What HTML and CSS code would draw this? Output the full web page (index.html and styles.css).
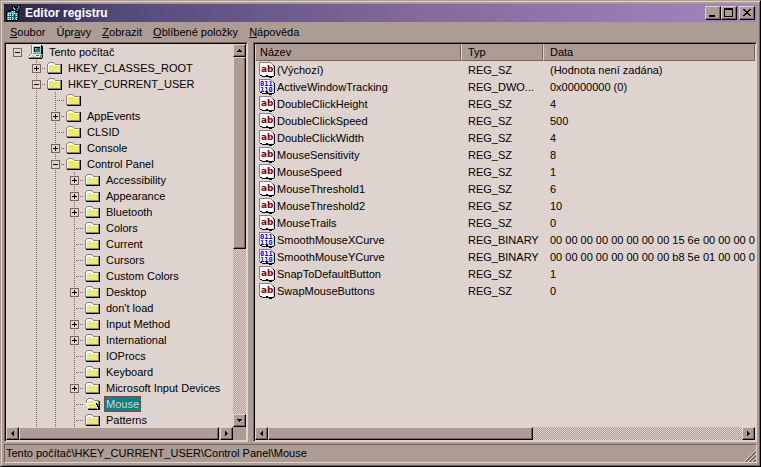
FILE: index.html
```
<!DOCTYPE html>
<html lang="cs">
<head>
    <meta charset="UTF-8">
    <meta name="viewport" content="width=device-width, initial-scale=1.0">
    <title>Editor registru</title>
    <link rel="stylesheet" href="styles.css">
</head>
<body>

    <svg class="sprites" aria-hidden="true">
        <defs>
            <pattern id="dots" width="2" height="2" patternUnits="userSpaceOnUse">
                <rect width="2" height="2" fill="#ffff00"/>
                <rect width="1" height="1" fill="#ded3ce"/>
                <rect x="1" y="1" width="1" height="1" fill="#ded3ce"/>
            </pattern>
            <pattern id="cubes" width="2" height="2" patternUnits="userSpaceOnUse">
                <rect width="2" height="2" fill="#00c6c6"/>
                <rect width="1" height="1" fill="#ffffff"/>
            </pattern>
        </defs>
        <symbol id="folder" viewBox="0 0 16 16">
            <path d="M1 14h14V4h-1v9H1z" fill="#000"/>
            <path d="M0 13V4h1V3h1V2h5v1h1v1h6v9z" fill="#848484"/>
            <path d="M1 12V4h1V3h5v1h1v1h5v7z" fill="#fff"/>
            <path d="M2 12V5h5v1h6v6z" fill="url(#dots)"/>
        </symbol>
        <symbol id="folder-open" viewBox="0 0 16 16">
            <path d="M3 13h11V5h1v9H3z" fill="#000"/>
            <path d="M1 7V4h1V3h1V2h5v1h1v1h5v9H3v-2H2V9H1z" fill="#848484"/>
            <path d="M2 8V4h1V3h5v1h1v1h4v8z" fill="#fff"/>
            <path d="M3 5h5v1h5v2H3z" fill="url(#dots)"/>
            <path d="M0 7h10v1h1v1h1v2h1v1H3v-1H2V9H1V8H0z" fill="#fff"/>
            <path d="M2 8h8v1h1v2h1v1H4v-2H3V9H2z" fill="url(#dots)"/>
            <path d="M11 7h1v1h1v2h1v3h-1v-2h-1V9h-1z" fill="#000"/>
        </symbol>
        <symbol id="computer" viewBox="0 0 16 16">
            <path d="M4 1h10v1h1v9H5v-1H4z" fill="#000"/>
            <path d="M3 1h10v9H3z" fill="#848484"/>
            <path d="M4 1h9v1H4zM4 2h1v8H4z" fill="#fff"/>
            <path d="M5 2h8v7H5z" fill="#c6c6c6"/>
            <path d="M6 3h6v5H6z" fill="#008484"/>
            <path d="M6 3h6v1H6zM6 3h1v5H6z" fill="#000"/>
            <path d="M7 4h2v1H8v1H7z" fill="#5acece"/>
            <path d="M2 10h13v1h-1v3h-1v1H1v-1H0v-1h1v-2h1z" fill="#848484"/>
            <path d="M3 10h10v1h-1v2H1v-1h1v-1h1z" fill="#fff"/>
            <path d="M3 12h1v-1h1v1h1v-1h1v1h1v-1h1v1h-1v1H3z" fill="#c6c6c6"/>
            <path d="M8 11h3v1H8z" fill="#009c00"/>
            <path d="M1 14h13v-3h1v3h-1v1H1z" fill="#000"/>
        </symbol>
        <symbol id="regedit" viewBox="0 0 16 16">
            <path d="M0 7h2V5h4V4h4v3h3v8h-1v1H0z" fill="#000"/>
            <path d="M1 8h1V7h3V6h4v2h2v7H1z" fill="url(#cubes)"/>
            <path d="M5 8h1v7H5zM8 9h1v6H8zM1 11h10v1H1z" fill="#006363"/>
            <path d="M6 1h3v1h1v3H9v1H7V5H6z" fill="#000"/>
            <path d="M7 2h1v1h1v2H8V4H7z" fill="#00ffff"/>
            <path d="M11 1h1V0h3v3h-1v2h-1v2h-2V5h-1V2h1z" fill="#000"/>
            <path d="M12 1h2v1h-1v2h-1v2h-1V3h1z" fill="#00a5a5"/>
            <path d="M11 8h1v5h-1z" fill="#008484"/>
        </symbol>
        <symbol id="page" viewBox="0 0 16 16">
            <path d="M13 2h1v1h1v1h1v10h-1v1h-3v-1h3V4h-2z" fill="#000"/>
            <path d="M1 13h2v1h3v-1h3v1h3v1h1v1h-3v-1H3v-1H1z" fill="#000"/>
            <path d="M0 0h12v1h1v1h1v11h-1v1h-3v-1H7v1H3v-1H0z" fill="#848484"/>
            <path d="M1 1h11v1h1v1h1v10h-1v1h-3v-1H7v1H3v-1H1z" fill="#fff"/>
        </symbol>
    </svg>

    <div class="window">
        <header class="titlebar">
            <svg class="icon"><use href="#regedit"/></svg>
            <h1>Editor registru</h1>
            <div class="controls">
                <button type="button" class="raised" aria-label="Minimalizovat">
                    <svg viewBox="0 0 12 10"><path d="M2 7h6v2H2z"/></svg>
                </button>
                <button type="button" class="raised" aria-label="Maximalizovat">
                    <svg viewBox="0 0 12 10"><path fill-rule="evenodd" d="M1 0h9v9H1zM2 2v6h7V2z"/></svg>
                </button>
                <button type="button" class="raised close" aria-label="Zavřít">
                    <svg viewBox="0 0 12 10"><path d="M2 1h2v1h1v1h2V2h1V1h2v1H9v1H8v1H7v1h1v1h1v1h1v1H8V7H7V6H5v1H4v1H2V7h1V6h1V5h1V4H4V3H3V2H2z"/></svg>
                </button>
            </div>
        </header>

        <nav class="menu">
            <button type="button"><u>S</u>oubor</button>
            <button type="button">Úpr<u>a</u>vy</button>
            <button type="button"><u>Z</u>obrazit</button>
            <button type="button"><u>O</u>blíbené položky</button>
            <button type="button"><u>N</u>ápověda</button>
        </nav>

        <main class="panes">
            <section class="pane tree-pane">
                <div class="tree">
                    <ul>
                        <li>
                            <div class="node root"><span class="joint"><button type="button" class="box minus" aria-label="Sbalit"></button></span><svg class="icon"><use href="#computer"/></svg><span class="label">Tento počítač</span></div>
                            <ul>
                                <li><div class="node"><span class="joint"><button type="button" class="box plus" aria-label="Rozbalit"></button></span><svg class="icon"><use href="#folder"/></svg><span class="label">HKEY_CLASSES_ROOT</span></div></li>
                                <li>
                                    <div class="node"><span class="joint"><button type="button" class="box minus" aria-label="Sbalit"></button></span><svg class="icon"><use href="#folder"/></svg><span class="label">HKEY_CURRENT_USER</span></div>
                                    <ul>
                                        <li><div class="node"><span class="joint"></span><svg class="icon"><use href="#folder"/></svg></div></li>
                                        <li><div class="node"><span class="joint"><button type="button" class="box plus" aria-label="Rozbalit"></button></span><svg class="icon"><use href="#folder"/></svg><span class="label">AppEvents</span></div></li>
                                        <li><div class="node"><span class="joint"></span><svg class="icon"><use href="#folder"/></svg><span class="label">CLSID</span></div></li>
                                        <li><div class="node"><span class="joint"><button type="button" class="box plus" aria-label="Rozbalit"></button></span><svg class="icon"><use href="#folder"/></svg><span class="label">Console</span></div></li>
                                        <li>
                                            <div class="node"><span class="joint"><button type="button" class="box minus" aria-label="Sbalit"></button></span><svg class="icon"><use href="#folder"/></svg><span class="label">Control Panel</span></div>
                                            <ul>
                                                <li><div class="node"><span class="joint"><button type="button" class="box plus" aria-label="Rozbalit"></button></span><svg class="icon"><use href="#folder"/></svg><span class="label">Accessibility</span></div></li>
                                                <li><div class="node"><span class="joint"><button type="button" class="box plus" aria-label="Rozbalit"></button></span><svg class="icon"><use href="#folder"/></svg><span class="label">Appearance</span></div></li>
                                                <li><div class="node"><span class="joint"><button type="button" class="box plus" aria-label="Rozbalit"></button></span><svg class="icon"><use href="#folder"/></svg><span class="label">Bluetooth</span></div></li>
                                                <li><div class="node"><span class="joint"></span><svg class="icon"><use href="#folder"/></svg><span class="label">Colors</span></div></li>
                                                <li><div class="node"><span class="joint"></span><svg class="icon"><use href="#folder"/></svg><span class="label">Current</span></div></li>
                                                <li><div class="node"><span class="joint"></span><svg class="icon"><use href="#folder"/></svg><span class="label">Cursors</span></div></li>
                                                <li><div class="node"><span class="joint"></span><svg class="icon"><use href="#folder"/></svg><span class="label">Custom Colors</span></div></li>
                                                <li><div class="node"><span class="joint"><button type="button" class="box plus" aria-label="Rozbalit"></button></span><svg class="icon"><use href="#folder"/></svg><span class="label">Desktop</span></div></li>
                                                <li><div class="node"><span class="joint"></span><svg class="icon"><use href="#folder"/></svg><span class="label">don't load</span></div></li>
                                                <li><div class="node"><span class="joint"><button type="button" class="box plus" aria-label="Rozbalit"></button></span><svg class="icon"><use href="#folder"/></svg><span class="label">Input Method</span></div></li>
                                                <li><div class="node"><span class="joint"><button type="button" class="box plus" aria-label="Rozbalit"></button></span><svg class="icon"><use href="#folder"/></svg><span class="label">International</span></div></li>
                                                <li><div class="node"><span class="joint"></span><svg class="icon"><use href="#folder"/></svg><span class="label">IOProcs</span></div></li>
                                                <li><div class="node"><span class="joint"></span><svg class="icon"><use href="#folder"/></svg><span class="label">Keyboard</span></div></li>
                                                <li><div class="node"><span class="joint"><button type="button" class="box plus" aria-label="Rozbalit"></button></span><svg class="icon"><use href="#folder"/></svg><span class="label">Microsoft Input Devices</span></div></li>
                                                <li><div class="node"><span class="joint"></span><svg class="icon"><use href="#folder-open"/></svg><span class="label selected">Mouse</span></div></li>
                                                <li><div class="node"><span class="joint"></span><svg class="icon"><use href="#folder"/></svg><span class="label">Patterns</span></div></li>
                                            </ul>
                                        </li>
                                    </ul>
                                </li>
                            </ul>
                        </li>
                    </ul>
                </div>
                <div class="scrollbar vertical">
                    <button type="button" class="raised" aria-label="Nahoru"><svg viewBox="0 0 5 5"><path d="M2 1h1v1h1v1h1v1H0V3h1V2h1z"/></svg></button>
                    <div class="thumb raised"></div>
                    <div class="track"></div>
                    <button type="button" class="raised" aria-label="Dolů"><svg viewBox="0 0 5 5"><path d="M0 1h5v1H4v1H3v1H2V3H1V2H0z"/></svg></button>
                </div>
                <div class="scrollbar horizontal">
                    <button type="button" class="raised" aria-label="Vlevo"><svg viewBox="0 0 5 5"><path d="M3 0h1v5H3V4H2V3H1V2h1V1h1z"/></svg></button>
                    <div class="thumb raised"></div>
                    <div class="track"></div>
                    <button type="button" class="raised" aria-label="Vpravo"><svg viewBox="0 0 5 5"><path d="M1 0h1v1h1v1h1v1H3v1H2v1H1z"/></svg></button>
                </div>
                <div class="corner"></div>
            </section>

            <section class="pane list-pane">
                <div class="list">
                    <table>
                        <colgroup>
                            <col class="col-name">
                            <col class="col-type">
                            <col>
                        </colgroup>
                        <thead>
                            <tr><th>Název</th><th>Typ</th><th>Data</th></tr>
                        </thead>
                        <tbody>
                            <tr><td><svg class="icon"><use href="#page"/><text x="2" y="10" class="ab">ab</text></svg>(Výchozí)</td><td>REG_SZ</td><td>(Hodnota není zadána)</td></tr>
                            <tr><td><svg class="icon"><use href="#page"/><text x="1" y="7" class="bin">011</text><text x="1" y="13" class="bin">110</text></svg>ActiveWindowTracking</td><td>REG_DWO...</td><td>0x00000000 (0)</td></tr>
                            <tr><td><svg class="icon"><use href="#page"/><text x="2" y="10" class="ab">ab</text></svg>DoubleClickHeight</td><td>REG_SZ</td><td>4</td></tr>
                            <tr><td><svg class="icon"><use href="#page"/><text x="2" y="10" class="ab">ab</text></svg>DoubleClickSpeed</td><td>REG_SZ</td><td>500</td></tr>
                            <tr><td><svg class="icon"><use href="#page"/><text x="2" y="10" class="ab">ab</text></svg>DoubleClickWidth</td><td>REG_SZ</td><td>4</td></tr>
                            <tr><td><svg class="icon"><use href="#page"/><text x="2" y="10" class="ab">ab</text></svg>MouseSensitivity</td><td>REG_SZ</td><td>8</td></tr>
                            <tr><td><svg class="icon"><use href="#page"/><text x="2" y="10" class="ab">ab</text></svg>MouseSpeed</td><td>REG_SZ</td><td>1</td></tr>
                            <tr><td><svg class="icon"><use href="#page"/><text x="2" y="10" class="ab">ab</text></svg>MouseThreshold1</td><td>REG_SZ</td><td>6</td></tr>
                            <tr><td><svg class="icon"><use href="#page"/><text x="2" y="10" class="ab">ab</text></svg>MouseThreshold2</td><td>REG_SZ</td><td>10</td></tr>
                            <tr><td><svg class="icon"><use href="#page"/><text x="2" y="10" class="ab">ab</text></svg>MouseTrails</td><td>REG_SZ</td><td>0</td></tr>
                            <tr><td><svg class="icon"><use href="#page"/><text x="1" y="7" class="bin">011</text><text x="1" y="13" class="bin">110</text></svg>SmoothMouseXCurve</td><td>REG_BINARY</td><td>00 00 00 00 00 00 00 00 15 6e 00 00 00 00</td></tr>
                            <tr><td><svg class="icon"><use href="#page"/><text x="1" y="7" class="bin">011</text><text x="1" y="13" class="bin">110</text></svg>SmoothMouseYCurve</td><td>REG_BINARY</td><td>00 00 00 00 00 00 00 00 b8 5e 01 00 00 00</td></tr>
                            <tr><td><svg class="icon"><use href="#page"/><text x="2" y="10" class="ab">ab</text></svg>SnapToDefaultButton</td><td>REG_SZ</td><td>1</td></tr>
                            <tr><td><svg class="icon"><use href="#page"/><text x="2" y="10" class="ab">ab</text></svg>SwapMouseButtons</td><td>REG_SZ</td><td>0</td></tr>
                        </tbody>
                    </table>
                </div>
                <div class="scrollbar horizontal">
                    <button type="button" class="raised" aria-label="Vlevo"><svg viewBox="0 0 5 5"><path d="M3 0h1v5H3V4H2V3H1V2h1V1h1z"/></svg></button>
                    <div class="thumb raised"></div>
                    <div class="track"></div>
                    <button type="button" class="raised" aria-label="Vpravo"><svg viewBox="0 0 5 5"><path d="M1 0h1v1h1v1h1v1H3v1H2v1H1z"/></svg></button>
                </div>
            </section>
        </main>

        <footer class="status">
            <span>Tento počítač\HKEY_CURRENT_USER\Control Panel\Mouse</span>
            <svg class="grip" viewBox="0 0 12 12">
                <path d="M0 12L12 0M4 12l8-8M8 12l4-4" stroke="#ded3ce"/>
                <path d="M1 12L12 1M2 12L12 2M5 12l7-7M6 12l6-6M9 12l3-3M10 12l2-2" stroke="#7b635a"/>
            </svg>
        </footer>
    </div>

</body>
</html>
```
FILE: styles.css
```
:root {
    --face: #ad9c94;
    --light: #ded3ce;
    --shadow: #7b635a;
    --select: #008484;
}
* {
    box-sizing: border-box;
}
body {
    margin: 0;
    font-family: "Liberation Sans", Arial, sans-serif;
    font-size: 11px;
    line-height: 16px;
    color: #000;
}
button {
    font: inherit;
    color: inherit;
    margin: 0;
    padding: 0;
    border: none;
    background: none;
}
svg {
    display: block;
    shape-rendering: crispEdges;
}
ul {
    list-style: none;
    margin: 0;
    padding: 0;
}
.sprites {
    position: absolute;
    width: 0;
    height: 0;
}
.icon {
    flex: none;
    width: 16px;
    height: 16px;
}
.ab {
    font: bold 9px "DejaVu Sans", sans-serif;
    fill: #840000;
}
.bin {
    font: bold 7px "DejaVu Sans Mono", monospace;
    fill: #0000ff;
}
.raised {
    background: var(--face);
    border: 1px solid;
    border-color: var(--light) #000 #000 var(--light);
    box-shadow: inset -1px -1px var(--shadow);
}

/* window frame */
.window {
    display: flex;
    flex-direction: column;
    height: 100vh;
    padding: 3px;
    background: var(--face);
    border: 1px solid;
    border-color: var(--face) #000 #000 var(--face);
    box-shadow: inset 1px 1px var(--light), inset -1px -1px var(--shadow);
}
.titlebar {
    display: flex;
    align-items: center;
    height: 18px;
    padding: 0 2px;
    background: linear-gradient(to right, #292042, #524a7b 15%, #84699c 55%, #a584bd);
}
.titlebar h1 {
    flex: 1;
    margin: 0 3px;
    font-size: 12px;
    line-height: 18px;
    color: #fff;
}
.controls {
    display: flex;
}
.controls button {
    width: 16px;
    height: 14px;
    padding: 1px;
}
.controls .close {
    margin-left: 2px;
}
.controls svg {
    width: 12px;
    height: 10px;
}
.menu {
    display: flex;
    gap: 11px;
    height: 20px;
    padding: 0 6px;
}
.menu button {
    line-height: 20px;
}

/* panes */
.panes {
    flex: 1;
    display: grid;
    grid-template-columns: 244px 1fr;
    gap: 5px;
    min-height: 0;
}
.pane {
    display: grid;
    grid-template-rows: 1fr 13px;
    min-width: 0;
    min-height: 0;
    background: var(--light);
    border: 1px solid;
    border-color: var(--shadow) var(--light) var(--light) var(--shadow);
    box-shadow: inset 1px 1px #000;
    padding: 1px;
}
.tree-pane {
    grid-template-columns: 1fr 13px;
}
.tree {
    overflow: hidden;
    padding-left: 2px;
}
.tree ul ul {
    padding-left: 19px;
    background: linear-gradient(var(--shadow) 1px, transparent 1px) 28px 0 / 1px 2px repeat-y;
}
.node {
    display: flex;
    align-items: center;
    height: 16px;
}
.joint {
    display: flex;
    align-items: center;
    flex: none;
    width: 19px;
    height: 16px;
    padding-left: 9px;
    background: linear-gradient(to right, var(--shadow) 1px, transparent 1px) 0 8px / 2px 1px repeat-x content-box;
}
.root .joint {
    background: none;
}
.box {
    flex: none;
    width: 9px;
    height: 9px;
    margin-left: -4px;
    border: 1px solid var(--shadow);
    background: linear-gradient(#000, #000) center / 5px 1px no-repeat, var(--light);
}
.plus {
    background: linear-gradient(#000, #000) center / 5px 1px no-repeat, linear-gradient(#000, #000) center / 1px 5px no-repeat, var(--light);
}
.node .icon {
    margin: 0 3px 0 1px;
}
.label {
    padding: 0 2px;
    white-space: nowrap;
}
.selected {
    line-height: 14px;
    background: var(--select);
    border: 1px dotted #bd2929;
    padding: 0 1px;
    color: var(--light);
}

/* scrollbars */
.scrollbar {
    display: flex;
    min-width: 0;
    min-height: 0;
}
.scrollbar.vertical {
    flex-direction: column;
}
.scrollbar button {
    display: flex;
    align-items: center;
    justify-content: center;
    flex: none;
    width: 13px;
    height: 13px;
}
.scrollbar button svg {
    width: 5px;
    height: 5px;
}
.track {
    flex: 1;
    background: repeating-conic-gradient(var(--face) 0 25%, var(--light) 0 50%) 0 0 / 2px 2px;
}
.thumb {
    flex: none;
}
.vertical .thumb {
    height: 50%;
}
.tree-pane .horizontal .thumb {
    width: 88%;
}
.list-pane .thumb {
    width: 53%;
}
.corner {
    background: var(--face);
}

/* value list */
.list {
    overflow: hidden;
}
table {
    width: 100%;
    table-layout: fixed;
    border-collapse: separate;
    border-spacing: 0;
}
.col-name {
    width: 206px;
}
.col-type {
    width: 82px;
}
th, td {
    height: 17px;
    padding: 0 0 0 6px;
    line-height: 15px;
    font-weight: normal;
    text-align: left;
    white-space: nowrap;
    overflow: hidden;
}
th {
    background: var(--face);
    border: 1px solid;
    border-color: var(--face) var(--shadow) var(--shadow) var(--light);
}
th:first-child {
    padding-left: 4px;
}
td {
    padding: 2px 0 0 7px;
}
td:first-child {
    display: flex;
    align-items: center;
    gap: 2px;
    padding: 1px 0 0 4px;
}

/* status bar */
.status {
    display: flex;
    align-items: flex-end;
    justify-content: space-between;
    height: 19px;
    margin-top: 2px;
    padding-left: 1px;
    border: 1px solid;
    border-color: var(--shadow) var(--light) var(--light) var(--shadow);
}
.status span {
    line-height: 17px;
}
.grip {
    width: 12px;
    height: 12px;
}
```
